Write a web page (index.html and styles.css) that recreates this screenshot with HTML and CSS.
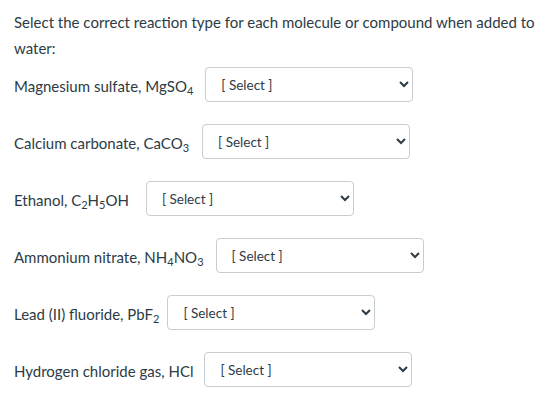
FILE: index.html
```html
<!DOCTYPE html>
<html>
<head>
<meta charset="utf-8">
<link rel="stylesheet" href="styles.css">
</head>
<body>
<div class="quiz">
  <p class="prompt">Select the correct reaction type for each molecule or compound when added to water:</p>
  <div class="row">
    <span class="label">Magnesium sulfate, MgSO<sub>4</sub></span>
    <select class="pick"><option>[ Select ]</option></select>
  </div>
  <div class="row row-wide">
    <span class="label">Calcium carbonate, CaCO<sub>3</sub></span>
    <select class="pick"><option>[ Select ]</option></select>
  </div>
  <div class="row row-wider">
    <span class="label">Ethanol, C<sub>2</sub>H<sub>5</sub>OH</span>
    <select class="pick"><option>[ Select ]</option></select>
  </div>
  <div class="row">
    <span class="label">Ammonium nitrate, NH<sub>4</sub>NO<sub>3</sub></span>
    <select class="pick"><option>[ Select ]</option></select>
  </div>
  <div class="row row-tight">
    <span class="label">Lead (II) fluoride, PbF<sub>2</sub></span>
    <select class="pick"><option>[ Select ]</option></select>
  </div>
  <div class="row row-narrow">
    <span class="label">Hydrogen chloride gas, HCl</span>
    <select class="pick"><option>[ Select ]</option></select>
  </div>
</div>
</body>
</html>
```

FILE: styles.css
```css
html, body {
  margin: 0;
  padding: 0;
  background: #ffffff;
}
.quiz {
  padding: 9px 14px 0 14px;
  font-family: Lato, "Open Sans", sans-serif;
  color: #2d3b45;
}
.prompt {
  margin: 0 0 6px 0;
  font-size: 15px;
  line-height: 26px;
}
.row {
  display: flex;
  align-items: center;
  gap: 12px;
  margin-bottom: 22px;
}
.row-wide { gap: 13px; }
.row-wider { gap: 17px; }
.row-tight { gap: 8px; }
.row-narrow { gap: 11px; }
.label {
  font-size: 15px;
  line-height: 22px;
  padding-top: 3px;
}
.label sub {
  font-size: 11px;
  line-height: 0;
  vertical-align: -3px;
}
.pick {
  width: 208px;
  height: 35px;
  box-sizing: border-box;
  border: 1px solid #c7cdd1;
  border-radius: 4px;
  background: #ffffff;
  color: #2d3b45;
  font-family: Lato, "Open Sans", sans-serif;
  font-size: 13.5px;
  padding: 1px 6px 0 11px;
}
```
